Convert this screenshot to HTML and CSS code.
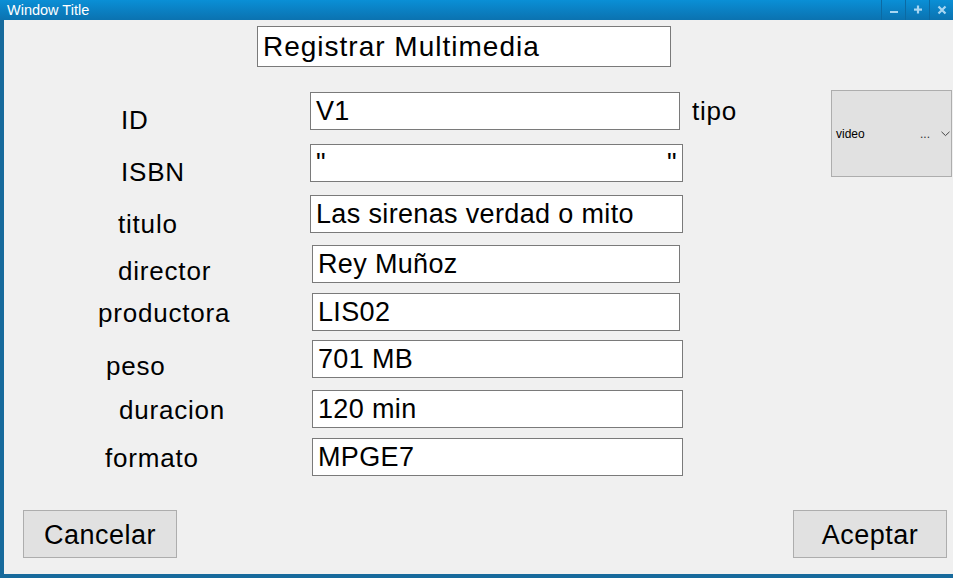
FILE: index.html
```html
<!DOCTYPE html>
<html lang="es">
<head>
<meta charset="utf-8">
<title>Registrar Multimedia</title>
<link rel="stylesheet" href="styles.css">
</head>
<body>
<div class="window">
  <div class="titlebar">
    <span class="title">Window Title</span>
    <div class="controls">
      <span class="ctl"><svg width="10" height="10" viewBox="0 0 10 10"><rect x="1" y="6" width="8" height="2" fill="#a8d6f2"/></svg></span>
      <span class="ctl"><svg width="10" height="10" viewBox="0 0 10 10"><rect x="1" y="3.5" width="8" height="2.2" fill="#a8d6f2"/><rect x="3.9" y="0.5" width="2.2" height="8" fill="#a8d6f2"/></svg></span>
      <span class="ctl"><svg width="10" height="10" viewBox="0 0 10 10"><path d="M1.5 1.5 L8.5 8.5 M8.5 1.5 L1.5 8.5" stroke="#a8d6f2" stroke-width="2.2"/></svg></span>
    </div>
  </div>
  <div class="content">
    <div class="header">
      <div class="field title-field">Registrar Multimedia</div>
    </div>
    <div class="main">
      <div class="form">
        <div class="row r-id"><span class="label">ID</span><div class="field">V1</div></div>
        <div class="row r-isbn"><span class="label">ISBN</span><div class="field quotes"><span>"</span><span>"</span></div></div>
        <div class="row r-titulo"><span class="label">titulo</span><div class="field">Las sirenas verdad o mito</div></div>
        <div class="row r-director"><span class="label">director</span><div class="field">Rey Muñoz</div></div>
        <div class="row r-productora"><span class="label">productora</span><div class="field">LIS02</div></div>
        <div class="row r-peso"><span class="label">peso</span><div class="field">701 MB</div></div>
        <div class="row r-duracion"><span class="label">duracion</span><div class="field">120 min</div></div>
        <div class="row r-formato"><span class="label">formato</span><div class="field">MPGE7</div></div>
      </div>
      <span class="tipo">tipo</span>
      <div class="combo">
        <span class="combo-text">video</span>
        <span class="combo-dots">...</span>
        <svg class="chev" width="9" height="6" viewBox="0 0 9 6"><path d="M0.5 0.8 L4.5 4.6 L8.5 0.8" fill="none" stroke="#444" stroke-width="1"/></svg>
      </div>
    </div>
    <div class="actions">
      <button class="btn btn-cancel">Cancelar</button>
      <button class="btn btn-ok">Aceptar</button>
    </div>
  </div>
</div>
</body>
</html>
```

FILE: styles.css
```css
* { box-sizing: border-box; }
html, body { margin: 0; padding: 0; }
body {
  width: 953px;
  height: 578px;
  overflow: hidden;
  font-family: "Liberation Sans", Arial, sans-serif;
  background: #f0f0f0;
}
.window {
  width: 953px;
  height: 578px;
  display: flex;
  flex-direction: column;
}
.titlebar {
  height: 20px;
  flex: none;
  background: linear-gradient(#0a8fd6, #0b72b0);
  display: flex;
  align-items: center;
  justify-content: space-between;
}
.title {
  color: #ffffff;
  font-size: 14.5px;
  padding-left: 7px;
  line-height: 20px;
}
.controls {
  display: flex;
  height: 20px;
}
.ctl {
  width: 24px;
  height: 20px;
  display: flex;
  align-items: center;
  justify-content: center;
  border-left: 1px solid #0c6aa3;
}
.content {
  flex: 1;
  display: flex;
  flex-direction: column;
  border-left: 4px solid #176a9c;
  border-bottom: 4px solid #176a9c;
  background: #f0f0f0;
}
.field {
  background: #ffffff;
  border: 1px solid #7a7a7a;
  color: #000;
  font-size: 27px;
  height: 38px;
  line-height: 36px;
  padding-left: 5px;
  white-space: nowrap;
  letter-spacing: 0.35px;
}
.header {
  padding: 6px 0 0 253px;
}
.title-field {
  width: 414px;
  height: 41px;
  line-height: 40px;
  font-size: 28px;
  letter-spacing: 1px;
}
.main {
  display: flex;
  align-items: flex-start;
  margin-top: 25px;
}
.form {
  display: flex;
  flex-direction: column;
  width: 680px;
  flex: none;
}
.row {
  display: flex;
  align-items: flex-start;
  height: 38px;
}
.row .label {
  font-size: 26px;
  color: #000;
  letter-spacing: 0.8px;
  width: 306px;
  flex: none;
}
.row .field { width: 370px; }
.r-id .label { padding: 13px 0 0 117px; }
.r-isbn { margin-top: 14px; }
.r-isbn .label { padding: 13px 0 0 117px; }
.r-isbn .field { width: 373px; }
.r-titulo { margin-top: 13px; }
.r-titulo .label { padding: 14px 0 0 114px; }
.r-titulo .field { width: 373px; }
.r-director { margin-top: 12px; }
.r-director .label { padding: 11px 0 0 114px; width: 308px; }
.r-director .field { width: 368px; }
.r-productora { margin-top: 10px; }
.r-productora .label { padding: 5px 0 0 94px; width: 308px; }
.r-productora .field { width: 368px; }
.r-peso { margin-top: 9px; }
.r-peso .label { padding: 11px 0 0 102px; width: 308px; }
.r-peso .field { width: 371px; }
.r-duracion { margin-top: 12px; }
.r-duracion .label { padding: 5px 0 0 115px; width: 308px; }
.r-duracion .field { width: 371px; }
.r-formato { margin-top: 10px; }
.r-formato .label { padding: 5px 0 0 101px; width: 308px; }
.r-formato .field { width: 371px; }
.quotes {
  display: flex;
  justify-content: space-between;
  padding-right: 5px;
}
.tipo {
  font-size: 26px;
  letter-spacing: 0.8px;
  margin-left: 8px;
  padding-top: 4px;
}
.combo {
  margin-left: auto;
  margin-right: 1px;
  margin-top: -2px;
  width: 121px;
  height: 87px;
  background: #e1e1e1;
  border: 1px solid #adadad;
  display: flex;
  align-items: center;
  padding: 0 0 0 4px;
  font-size: 12px;
}
.combo-text { flex: 1; color: #000; }
.combo-dots { color: #333; margin-right: 11px; }
.chev { margin-right: 1px; }
.actions {
  margin-top: auto;
  display: flex;
  justify-content: space-between;
  padding: 0 6px 15px 19px;
}
.btn {
  width: 154px;
  height: 48px;
  background: #e1e1e1;
  border: 1px solid #adadad;
  font-family: "Liberation Sans", Arial, sans-serif;
  font-size: 27px;
  letter-spacing: 0.5px;
  color: #000;
  padding: 2px 0 0 0;
}
.btn-ok { margin-bottom: 1px; }
```
